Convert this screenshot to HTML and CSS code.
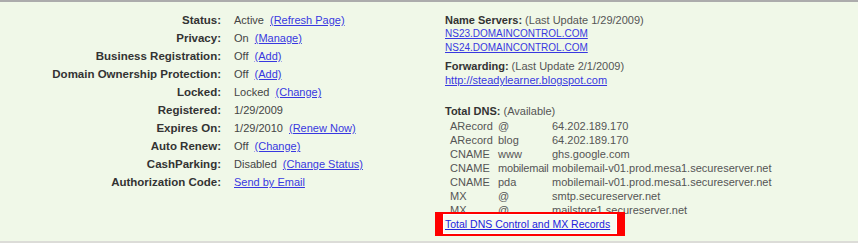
FILE: index.html
```html
<!doctype html>
<html lang="en-us">
  <head>
    <meta charset="utf-8">
    <title>Domain Details</title>
    <link rel="stylesheet" href="styles.css">
  </head>
  <body>
    <div id="domainpanel" class="domainpanel">
      <div class="summary">
        <div class="label">Status:</div>
        <div class="value">Active <a href="#">(Refresh Page)</a></div>
        <div class="label">Privacy:</div>
        <div class="value">On <a href="#">(Manage)</a></div>
        <div class="label">Business Registration:</div>
        <div class="value">Off <a href="#">(Add)</a></div>
        <div class="label">Domain Ownership Protection:</div>
        <div class="value">Off <a href="#">(Add)</a></div>
        <div class="label">Locked:</div>
        <div class="value">Locked <a href="#">(Change)</a></div>
        <div class="label">Registered:</div>
        <div class="value">1/29/2009</div>
        <div class="label">Expires On:</div>
        <div class="value">1/29/2010 <a href="#">(Renew Now)</a></div>
        <div class="label">Auto Renew:</div>
        <div class="value">Off <a href="#">(Change)</a></div>
        <div class="label">CashParking:</div>
        <div class="value">Disabled <a href="#">(Change Status)</a></div>
        <div class="label">Authorization Code:</div>
        <div class="value"><a href="#" class="nogap">Send by Email</a></div>
      </div>

      <div class="details">
        <div class="block">
          <div class="head"><b>Name Servers:</b> (Last Update 1/29/2009)</div>
          <a href="#" class="ns">NS23.DOMAINCONTROL.COM</a>
          <a href="#" class="ns">NS24.DOMAINCONTROL.COM</a>
        </div>
        <div class="block forwarding">
          <div class="head"><b>Forwarding:</b> (Last Update 2/1/2009)</div>
          <a href="#" class="line">http://steadylearner.blogspot.com</a>
        </div>
        <div class="block dns">
          <div class="head dnshead"><b>Total DNS:</b> (Available)</div>
          <div class="dnstable">
            <span>ARecord</span><span>@</span><span>64.202.189.170</span>
            <span>ARecord</span><span>blog</span><span>64.202.189.170</span>
            <span>CNAME</span><span>www</span><span>ghs.google.com</span>
            <span>CNAME</span><span class="tight">mobilemail</span><span>mobilemail-v01.prod.mesa1.secureserver.net</span>
            <span>CNAME</span><span>pda</span><span>mobilemail-v01.prod.mesa1.secureserver.net</span>
            <span>MX</span><span>@</span><span>smtp.secureserver.net</span>
            <span>MX</span><span>@</span><span>mailstore1.secureserver.net</span>
          </div>
        </div>
        <div class="dnslink"><a href="#">Total DNS Control and MX Records</a></div>
      </div>
    </div>
  </body>
</html>
```
FILE: styles.css
```css
html, body { padding: 0; margin: 0; background-color: #f0f8e8; font-family: "Liberation Sans", Arial, sans-serif; font-size: 11px; color: #444; }
a { color: #3838e0; }
.domainpanel { display: flex; height: 239px; border-top: 2px solid #acacac; border-bottom: 2px solid #dcdcd8; background-color: #f0f8e8; overflow: hidden; }
.summary { width: 445px; flex: none; display: grid; grid-template-columns: 221px 1fr; grid-auto-rows: 18px; column-gap: 13px; align-items: center; align-content: start; padding-top: 9px; }
.label { text-align: right; font-weight: bold; font-size: 11.5px; color: #333; white-space: nowrap; }
.value { white-space: nowrap; }
.value a { margin-left: 3px; }
.value a.nogap { margin-left: 0; }
.details { padding-top: 11px; line-height: 14px; }
.block .head { color: #555; white-space: nowrap; }
.block .head b { color: #333; }
.ns, .line { display: block; }
.ns { font-size: 10px; }
.forwarding { margin-top: 4px; }
.dns { margin-top: 17px; }
.dnshead { line-height: 15px; }
.dnstable { display: grid; grid-template-columns: 48px 54px auto; grid-auto-rows: 14px; padding-left: 5px; color: #555; white-space: nowrap; }
.dnstable .tight { letter-spacing: -0.2px; }
.dnslink { position: relative; margin: -5px 0 0 -10px; width: 172px; height: 20px; line-height: 20px; padding-left: 2px; border: solid #f00; border-width: 2px 8px; background-color: #f6faf1; box-shadow: inset 0 0 0 1px #fff; font-size: 10.5px; white-space: nowrap; }
.dnslink a { color: #2222dd; }
```
